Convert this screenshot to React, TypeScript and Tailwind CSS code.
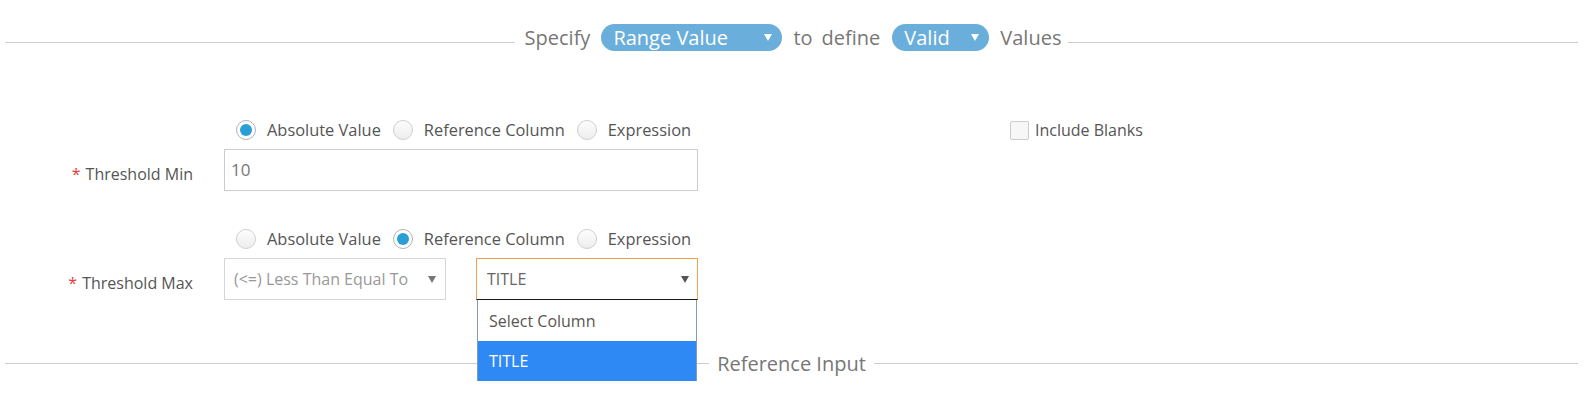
import React from 'react';

const Caret: React.FC<{ color: string }> = ({ color }) => (
    <svg width="8" height="7" viewBox="0 0 8 7" className="shrink-0">
        <polygon points="0,0 8,0 4,7" fill={color} />
    </svg>
);

const Pill: React.FC<{ label: string; width: string }> = ({ label, width }) => (
    <div className={`${width} h-[27px] rounded-full bg-[#6aaedb] text-white text-[20px] flex items-center justify-between pl-[12px] pr-[10px]`}>
        <span>{label}</span>
        <Caret color="#ffffff" />
    </div>
);

const Radio: React.FC<{ label: string; checked?: boolean }> = ({ label, checked }) => (
    <label className="flex items-center gap-[11px]">
        {checked ? (
            <span className="w-[20px] h-[20px] rounded-full border border-[#a9b3bf] bg-white flex items-center justify-center">
                <span className="w-[12px] h-[12px] rounded-full bg-[#2a9fd6]" />
            </span>
        ) : (
            <span className="w-[20px] h-[20px] rounded-full border border-[#cfcfcf] bg-linear-to-b from-[#fdfdfd] to-[#ededed]" />
        )}
        <span>{label}</span>
    </label>
);

const RadioRow: React.FC<{ selected: number }> = ({ selected }) => (
    <div className="flex items-center gap-[12px] text-[16.4px]">
        <Radio label="Absolute Value" checked={selected === 0} />
        <Radio label="Reference Column" checked={selected === 1} />
        <Radio label="Expression" checked={selected === 2} />
    </div>
);

const FieldLabel: React.FC<{ text: string }> = ({ text }) => (
    <div className="w-[193px] shrink-0 h-[42px] pt-[8px] flex items-center justify-end">
        <span className="text-[#e2403a] mr-[5px]">*</span>
        <span>{text}</span>
    </div>
);

const App: React.FC = () => {
    return (
        <div className="w-[1594px] h-[400px] bg-white overflow-hidden font-['Open_Sans',sans-serif] text-[16px] leading-[22px] text-[#555555]">
            <div className="pt-[24px] pl-[5px] pr-[16px]">
                <div className="flex items-start">
                    <div className="flex-1 h-px bg-[#cccccc] mt-[18px]" />
                    <div className="flex items-center gap-[11px] pl-[10px] pr-[7px] text-[20px] leading-[27px] text-[#777777]">
                        <span>Specify</span>
                        <Pill label="Range Value" width="w-[181px]" />
                        <span>to</span>
                        <span className="-ml-[2px] mr-[1px]">define</span>
                        <Pill label="Valid" width="w-[97px]" />
                        <span>Values</span>
                    </div>
                    <div className="flex-1 h-px bg-[#cccccc] mt-[18px]" />
                </div>
            </div>

            <div className="mt-[69px]">
                <div className="flex items-center h-[20px]">
                    <div className="w-[224px] shrink-0" />
                    <div className="w-[474px] shrink-0 pl-[12px]">
                        <RadioRow selected={0} />
                    </div>
                    <label className="ml-[312px] flex items-center gap-[6px]">
                        <span className="w-[19px] h-[19px] rounded-[2px] border border-[#cccccc] bg-[#f7f7f7]" />
                        <span>Include Blanks</span>
                    </label>
                </div>

                <div className="flex mt-[9px]">
                    <FieldLabel text="Threshold Min" />
                    <div className="ml-[31px] w-[474px] h-[42px] border border-[#cccccc] pl-[6px] flex items-center text-[17px] text-[#777777]">
                        10
                    </div>
                </div>

                <div className="flex items-center h-[20px] mt-[38px]">
                    <div className="w-[224px] shrink-0" />
                    <div className="pl-[12px]">
                        <RadioRow selected={1} />
                    </div>
                </div>

                <div className="flex mt-[9px]">
                    <FieldLabel text="Threshold Max" />
                    <div className="ml-[31px] flex gap-[30px]">
                        <div className="w-[222px] h-[42px] border border-[#d6d6d6] pl-[9px] pr-[9px] flex items-center justify-between text-[#999999]">
                            <span>(&lt;=) Less Than Equal To</span>
                            <Caret color="#777777" />
                        </div>
                        <div className="relative w-[222px] h-[42px]">
                            <div className="h-full border border-[#f0a050] border-b-[#1a1a1a] pl-[10px] pr-[8px] flex items-center justify-between text-[#666666]">
                                <span>TITLE</span>
                                <Caret color="#555555" />
                            </div>
                            <div className="absolute top-full left-[1px] right-[1px] bg-white border-x border-[#7f9db9] z-10">
                                <div className="h-[41px] pl-[11px] flex items-center text-[#5a5550]">Select Column</div>
                                <div className="h-[40px] pl-[11px] flex items-center bg-[#2f89f5] text-white">TITLE</div>
                            </div>
                        </div>
                    </div>
                </div>

                <div className="mt-[50px] pl-[5px] pr-[16px] flex items-center">
                    <div className="flex-1 h-px bg-[#cccccc]" />
                    <span className="px-[8px] text-[20px] leading-[27px] text-[#777777]">Reference Input</span>
                    <div className="flex-1 h-px bg-[#cccccc]" />
                </div>
            </div>
        </div>
    );
};

export default App;
